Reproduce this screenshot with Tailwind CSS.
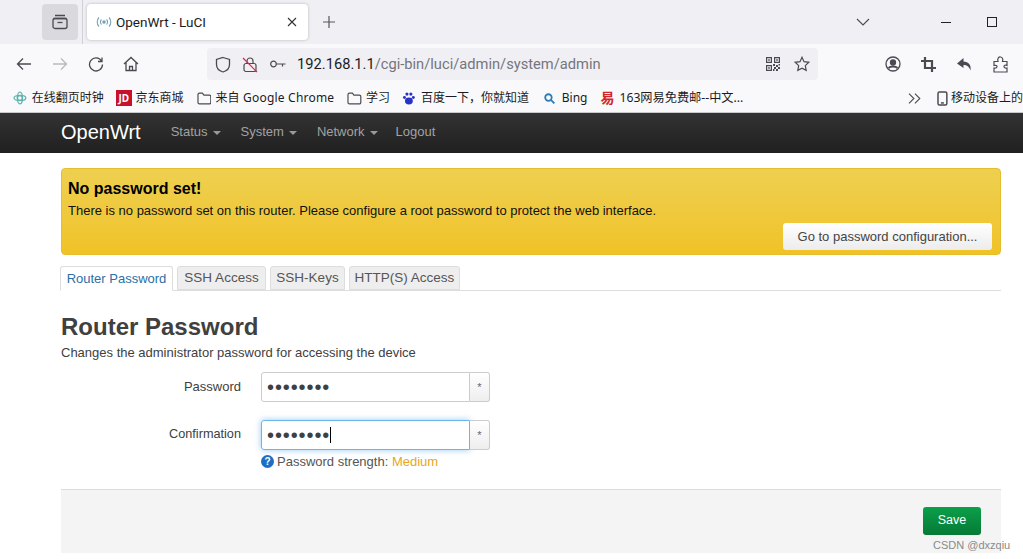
<!DOCTYPE html>
<html lang="en">
<head>
    <meta charset="UTF-8">
    <title>OpenWrt - LuCI</title>
    <script src="https://cdn.jsdelivr.net/npm/@tailwindcss/browser@4"></script>
</head>
<body class="relative bg-white h-[559px] overflow-hidden font-['Liberation_Sans',sans-serif]">
    <!-- tab strip -->
    <div class="h-[44px] bg-[#f0f0f4] flex items-center relative">
        <div class="ml-[42px] w-[36px] h-[36px] rounded bg-[#dadade] flex items-center justify-center">
            <svg class="w-[18px] h-[18px]" viewBox="0 0 18 18" fill="none" stroke="#4a4a52" stroke-width="1.3"><path d="M4 2.5h10M2.5 5.5h13"/><rect x="2" y="5.5" width="14" height="10" rx="2"/><path d="M6.5 9.5h5"/></svg>
        </div>
        <div class="w-px h-[44px] bg-[#d0d0d6] ml-[4px]"></div>
        <div class="ml-[4px] w-[221px] h-[36px] bg-white rounded shadow-[0_0_3px_rgba(0,0,0,0.25)] flex items-center pl-[9px] pr-[11px]">
            <svg class="w-[16px] h-[12px]" viewBox="0 0 16 12" fill="none" stroke="#7aa3b8" stroke-width="1.1"><circle cx="8" cy="6" r="1.2" fill="#7aa3b8"/><path d="M5.5 3.5a3.5 3.5 0 0 0 0 5M10.5 3.5a3.5 3.5 0 0 1 0 5M3 1.5a6.500 6.500 0 0 0 0 9M13 1.500a6.500 6.500 0 0 1 0 9"/></svg>
            <span class="ml-[4px] text-[13.500px] text-[#1c1b22] font-['Roboto',sans-serif]">OpenWrt - LuCI</span>
            <svg class="w-[10px] h-[10px] ml-auto" viewBox="0 0 10 10" stroke="#333" stroke-width="1.1"><path d="M1 1l8 8M9 1l-8 8"/></svg>
        </div>
        <svg class="ml-[14px] w-[14px] h-[14px]" viewBox="0 0 14 14" stroke="#55555c" stroke-width="1.2"><path d="M7 1v12M1 7h12"/></svg>
        <svg class="ml-[520px] w-[14px] h-[8px]" viewBox="0 0 14 8" fill="none" stroke="#4a4a52" stroke-width="1.1"><path d="M1 1l6 6 6-6"/></svg>
        <div class="ml-[71px] w-[10px] h-px bg-[#222]"></div>
        <div class="ml-[36px] w-[10px] h-[10px] border border-[#222]"></div>
    </div>
    <!-- toolbar -->
    <div class="h-[40px] bg-[#f9f9fb] flex items-center">
        <svg class="ml-[16px] w-[16px] h-[14px]" viewBox="0 0 16 14" fill="none" stroke="#4a4a52" stroke-width="1.3"><path d="M15 7H1.500M7 1.500L1.500 7 7 12.500"/></svg>
        <svg class="ml-[20px] w-[16px] h-[14px]" viewBox="0 0 16 14" fill="none" stroke="#b9b9bf" stroke-width="1.300"><path d="M1 7h13.500M9 1.500L14.500 7 9 12.500"/></svg>
        <svg class="ml-[20px] w-[16px] h-[16px]" viewBox="0 0 16 16" fill="none" stroke="#4a4a52" stroke-width="1.3"><path d="M13.500 5A6.500 6.500 0 1 0 14.500 8.500M14 1.500V5.500H10"/></svg>
        <svg class="ml-[19px] w-[16px] h-[16px]" viewBox="0 0 16 16" fill="none" stroke="#4a4a52" stroke-width="1.3"><path d="M1 8l7-6.500L15 8M3 6.500V14.500H13V6.500M6.500 14.500V10.500H9.500V14.500"/></svg>
        <div class="ml-[68px] w-[611px] h-[32px] bg-[#f0f0f4] rounded flex items-center">
            <svg class="ml-[8px] w-[16px] h-[17px]" viewBox="0 0 16 17" fill="none" stroke="#4a4a52" stroke-width="1.3"><path d="M8 1.500l6.500 2v5c0 4-3 6.500-6.500 7.500-3.500-1-6.500-3.500-6.500-7.500v-5z"/></svg>
            <svg class="ml-[11px] w-[16px] h-[17px]" viewBox="0 0 16 17" fill="none" stroke="#4a4a52" stroke-width="1.200"><path d="M5 7.500V5a3 3 0 0 1 6 0v2.500"/><rect x="2" y="7.500" width="12" height="8" rx="2"/><path d="M1 2l14 14" stroke="#d7264f"/></svg>
            <svg class="ml-[12px] w-[16px] h-[8px]" viewBox="0 0 16 8" fill="none" stroke="#4a4a52" stroke-width="1.200"><circle cx="3.500" cy="4" r="2.800"/><path d="M6.500 4H15.500M12.500 4v2.500"/></svg>
            <span class="ml-[11px] text-[14.700px] leading-none text-[#1c1b22] font-['Roboto',sans-serif] whitespace-nowrap">192.168.1.1<span class="text-[#75757c]">/cgi-bin/luci/admin/system/admin</span></span>
            <svg class="ml-auto w-[14px] h-[14px]" viewBox="0 0 14 14" fill="#4a4a52"><path fill-rule="evenodd" d="M0 0h6v6H0zM1.200 1.200v3.600h3.600V1.200zM8 0h6v6H8zM9.200 1.200v3.600h3.600V1.200zM0 8h6v6H0zM1.200 9.200v3.600h3.600V9.200z"/><path d="M2.200 2.200h1.600v1.600H2.200zM10.200 2.200h1.600v1.600h-1.600zM2.200 10.200h1.600v1.600H2.200zM7 7h2v2H7zM10 8h2v2h-2zM12 10h2v2h-2zM8 10h2v2H8zM10 12h2v2h-2zM7 12h1.500v2H7zM12.500 7H14v1.500h-1.500z"/></svg>
            <svg class="ml-[14px] mr-[8px] w-[16px] h-[16px]" viewBox="0 0 16 16" fill="none" stroke="#4a4a52" stroke-width="1.200"><path d="M8 1.300l2 4.400 4.800.6-3.500 3.300.9 4.800L8 12.100l-4.200 2.300.9-4.800L1.200 6.300 6 5.700z"/></svg>
        </div>
        <svg class="ml-[67px] w-[16px] h-[16px]" viewBox="0 0 16 16" fill="none" stroke="#4a4a52" stroke-width="1.300"><circle cx="8" cy="8" r="7"/><circle cx="8" cy="6.500" r="2.500" fill="#4a4a52"/><path d="M3.500 12c2-2 7-2 9 0" stroke-width="2"/></svg>
        <svg class="ml-[20px] w-[15px] h-[15px]" viewBox="0 0 15 15" fill="none" stroke="#4a4a52" stroke-width="2.200"><path d="M4 0v11h11M0 4h11v11"/></svg>
        <svg class="ml-[21px] w-[15px] h-[13px]" viewBox="0 0 15 13" fill="#4a4a52"><path d="M6.500 0L0 5.500 6.500 10V7c3.500 0 5.500 1.500 7 5.500C14.500 7 11.500 3.500 6.500 3.500z"/></svg>
        <svg class="ml-[21px] w-[15px] h-[17px]" viewBox="0 0 15 17" fill="none" stroke="#4a4a52" stroke-width="1.200"><path d="M1 5.500h4C4 2 6 .8 7.500 1s3 1.500 2 4.500h4.500v4c-2-1-3 0-3 1s1 2 3 1.500v4H1v-4c2 .5 3-.5 3-1.500S3 9 1 9.500z"/></svg>
    </div>
    <!-- bookmarks -->
    <div class="h-[28px] bg-[#f9f9fb] flex items-center text-[12px] text-[#1c1b22] whitespace-nowrap font-['Noto_Sans','Noto_Sans_CJK_SC',sans-serif]">
        <svg class="ml-[13px] w-[14px] h-[14px]" viewBox="0 0 14 14" fill="none" stroke="#5fb5ac" stroke-width="1.300"><circle cx="7" cy="7" r="2.500"/><ellipse cx="7" cy="7" rx="6" ry="2.600"/><ellipse cx="7" cy="7" rx="2.600" ry="6"/></svg>
        <span class="ml-[5px]">在线翻页时钟</span>
        <span class="ml-[12px] w-[16px] h-[16px] bg-[#c8102e] text-white text-[10px] font-bold flex items-center justify-center">JD</span>
        <span class="ml-[4px]">京东商城</span>
        <svg class="ml-[13px] w-[15px] h-[13px]" viewBox="0 0 15 13" fill="none" stroke="#4a4a52" stroke-width="1.200"><path d="M1 2.500a1.500 1.500 0 0 1 1.500-1.500h3l1.500 2h5.500a1.500 1.500 0 0 1 1.500 1.500v6a1.500 1.500 0 0 1-1.500 1.500h-10A1.500 1.500 0 0 1 1 10.500z"/></svg>
        <span class="ml-[4px] tracking-[.2px]">来自 Google Chrome</span>
        <svg class="ml-[13px] w-[15px] h-[13px]" viewBox="0 0 15 13" fill="none" stroke="#4a4a52" stroke-width="1.200"><path d="M1 2.500a1.500 1.500 0 0 1 1.500-1.500h3l1.500 2h5.500a1.500 1.500 0 0 1 1.500 1.500v6a1.500 1.500 0 0 1-1.500 1.500h-10A1.500 1.500 0 0 1 1 10.500z"/></svg>
        <span class="ml-[4px]">学习</span>
        <svg class="ml-[12px] w-[14px] h-[14px]" viewBox="0 0 14 14" fill="#2932c8"><ellipse cx="7" cy="10" rx="4" ry="3.500"/><circle cx="2.500" cy="6.500" r="1.500"/><circle cx="11.500" cy="6.500" r="1.500"/><circle cx="5" cy="3" r="1.600"/><circle cx="9" cy="3" r="1.600"/></svg>
        <span class="ml-[5px]">百度一下，你就知道</span>
        <svg class="ml-[15px] w-[11px] h-[11px]" viewBox="0 0 11 11" fill="none" stroke="#2b7bb9" stroke-width="1.800"><circle cx="4.500" cy="4.500" r="3.300"/><path d="M7 7l3.500 3.500"/></svg>
        <span class="ml-[7px]">Bing</span>
        <span class="ml-[13px] text-[14px] leading-none font-bold text-[#d3242a]">易</span>
        <span class="ml-[5px] text-[12.200px]">163网易免费邮--中文...</span>
        <svg class="ml-[165px] w-[13px] h-[11px]" viewBox="0 0 13 11" fill="none" stroke="#4a4a52" stroke-width="1.100"><path d="M1 .5l5 5-5 5M7 .5l5 5-5 5"/></svg>
        <svg class="ml-[16px] w-[11px] h-[15px]" viewBox="0 0 11 15" fill="none" stroke="#4a4a52" stroke-width="1.500"><rect x="1" y="1" width="9" height="13" rx="1.500"/><path d="M4 12h3"/></svg>
        <span class="ml-[3px]">移动设备上的</span>
    </div>
    <div class="h-px bg-[#c8c8cc]"></div>
    <!-- nav -->
    <nav class="h-[40px] bg-gradient-to-b from-[#333] to-[#202020] flex items-center text-[13px] text-[#a2a2a2] pb-[2px]">
        <span class="ml-[61px] text-[20px] text-white">OpenWrt</span>
        <span class="ml-[30px]">Status</span><span class="ml-[5px] mt-[2px] border-x-[4px] border-x-transparent border-t-[4px] border-t-[#999]"></span>
        <span class="ml-[20px]">System</span><span class="ml-[5px] mt-[2px] border-x-[4px] border-x-transparent border-t-[4px] border-t-[#999]"></span>
        <span class="ml-[20px]">Network</span><span class="ml-[5px] mt-[2px] border-x-[4px] border-x-transparent border-t-[4px] border-t-[#999]"></span>
        <span class="ml-[18px]">Logout</span>
    </nav>
    <!-- content -->
    <main class="pl-[61px] pr-[22px] pt-[15px]">
        <div class="relative h-[87px] rounded border border-[#e6bd2e] bg-gradient-to-b from-[#eed04f] to-[#f0c225] px-[6px] pt-[10px] text-[#111]">
            <h4 class="text-[16px] leading-[20px] font-bold text-black">No password set!</h4>
            <p class="text-[13px] leading-[19px] mt-[2px]">There is no password set on this router. Please configure a root password to protect the web interface.</p>
            <button class="absolute right-[8px] bottom-[4px] w-[209px] h-[27px] rounded-[3px] bg-gradient-to-b from-white to-[#ececec] text-[13px] text-[#444]">Go to password configuration...</button>
        </div>
        <div class="-ml-[1px] mt-[11px] h-[25px] flex items-end gap-[4px] border-b border-[#ddd] text-[13.500px] text-[#555]">
            <div class="w-[113px] h-[25px] -mb-px bg-white border border-[#ddd] border-b-white rounded-t-[3px] text-[13px] text-[#2a6fa8] flex items-center justify-center">Router Password</div>
            <div class="w-[89px] h-[24px] bg-[#eee] border border-[#ddd] rounded-t-[3px] flex items-center justify-center">SSH Access</div>
            <div class="w-[75px] h-[24px] bg-[#eee] border border-[#ddd] rounded-t-[3px] flex items-center justify-center">SSH-Keys</div>
            <div class="w-[111px] h-[24px] bg-[#eee] border border-[#ddd] rounded-t-[3px] flex items-center justify-center">HTTP(S) Access</div>
        </div>
        <h2 class="mt-[21px] text-[24px] leading-[30px] font-bold text-[#404040]">Router Password</h2>
        <p class="mt-[2px] text-[13px] leading-[18px] text-[#404040]">Changes the administrator password for accessing the device</p>
        <div class="mt-[10px] flex items-center">
            <label class="w-[180px] text-right text-[13px] text-[#404040]">Password</label>
            <div class="ml-[20px] flex h-[30px] w-[229px]">
                <div class="w-[209px] border border-[#ccc] rounded-l-[3px] flex items-center pl-[5px] text-[#404040] text-[20px] leading-none tracking-[.9px]">••••••••</div>
                <div class="w-[20px] border border-l-0 border-[#ccc] rounded-r-[3px] bg-gradient-to-b from-white to-[#eee] flex items-center justify-center text-[11px] text-[#666]">*</div>
            </div>
        </div>
        <div class="mt-[18px] flex items-center">
            <label class="w-[180px] text-right text-[12.700px] text-[#404040]">Confirmation</label>
            <div class="ml-[20px] flex h-[30px] w-[229px]">
                <div class="w-[209px] border border-[#6db5e8] rounded-l-[3px] shadow-[0_0_6px_rgba(82,168,236,0.6)] flex items-center pl-[5px] text-[#404040] text-[20px] leading-none tracking-[.9px]">••••••••<span class="w-px h-[16px] bg-black"></span></div>
                <div class="w-[20px] border border-l-0 border-[#ccc] rounded-r-[3px] bg-gradient-to-b from-white to-[#eee] flex items-center justify-center text-[11px] text-[#666]">*</div>
            </div>
        </div>
        <div class="ml-[200px] mt-[2px] flex items-center text-[13px] text-[#555]">
            <span class="w-[13px] h-[13px] rounded-full bg-[#1c6fc4] text-white text-[10px] font-bold flex items-center justify-center">?</span>
            <span class="ml-[3px]">Password strength: <span class="text-[#e8a61c]">Medium</span></span>
        </div>
        <div class="mt-[17px] h-[64px] bg-[#f4f4f5] border-t border-[#ddd] flex justify-end pt-[17px] pr-[20px]">
            <button class="w-[58px] h-[28px] rounded-[3px] bg-gradient-to-b from-[#0ba04a] to-[#067a35] text-white text-[12.500px]">Save</button>
        </div>
    </main>
    <span class="absolute left-[933px] top-[537px] text-[11px] text-[#8a8a8a]">CSDN @dxzqiu</span>
</body>
</html>
